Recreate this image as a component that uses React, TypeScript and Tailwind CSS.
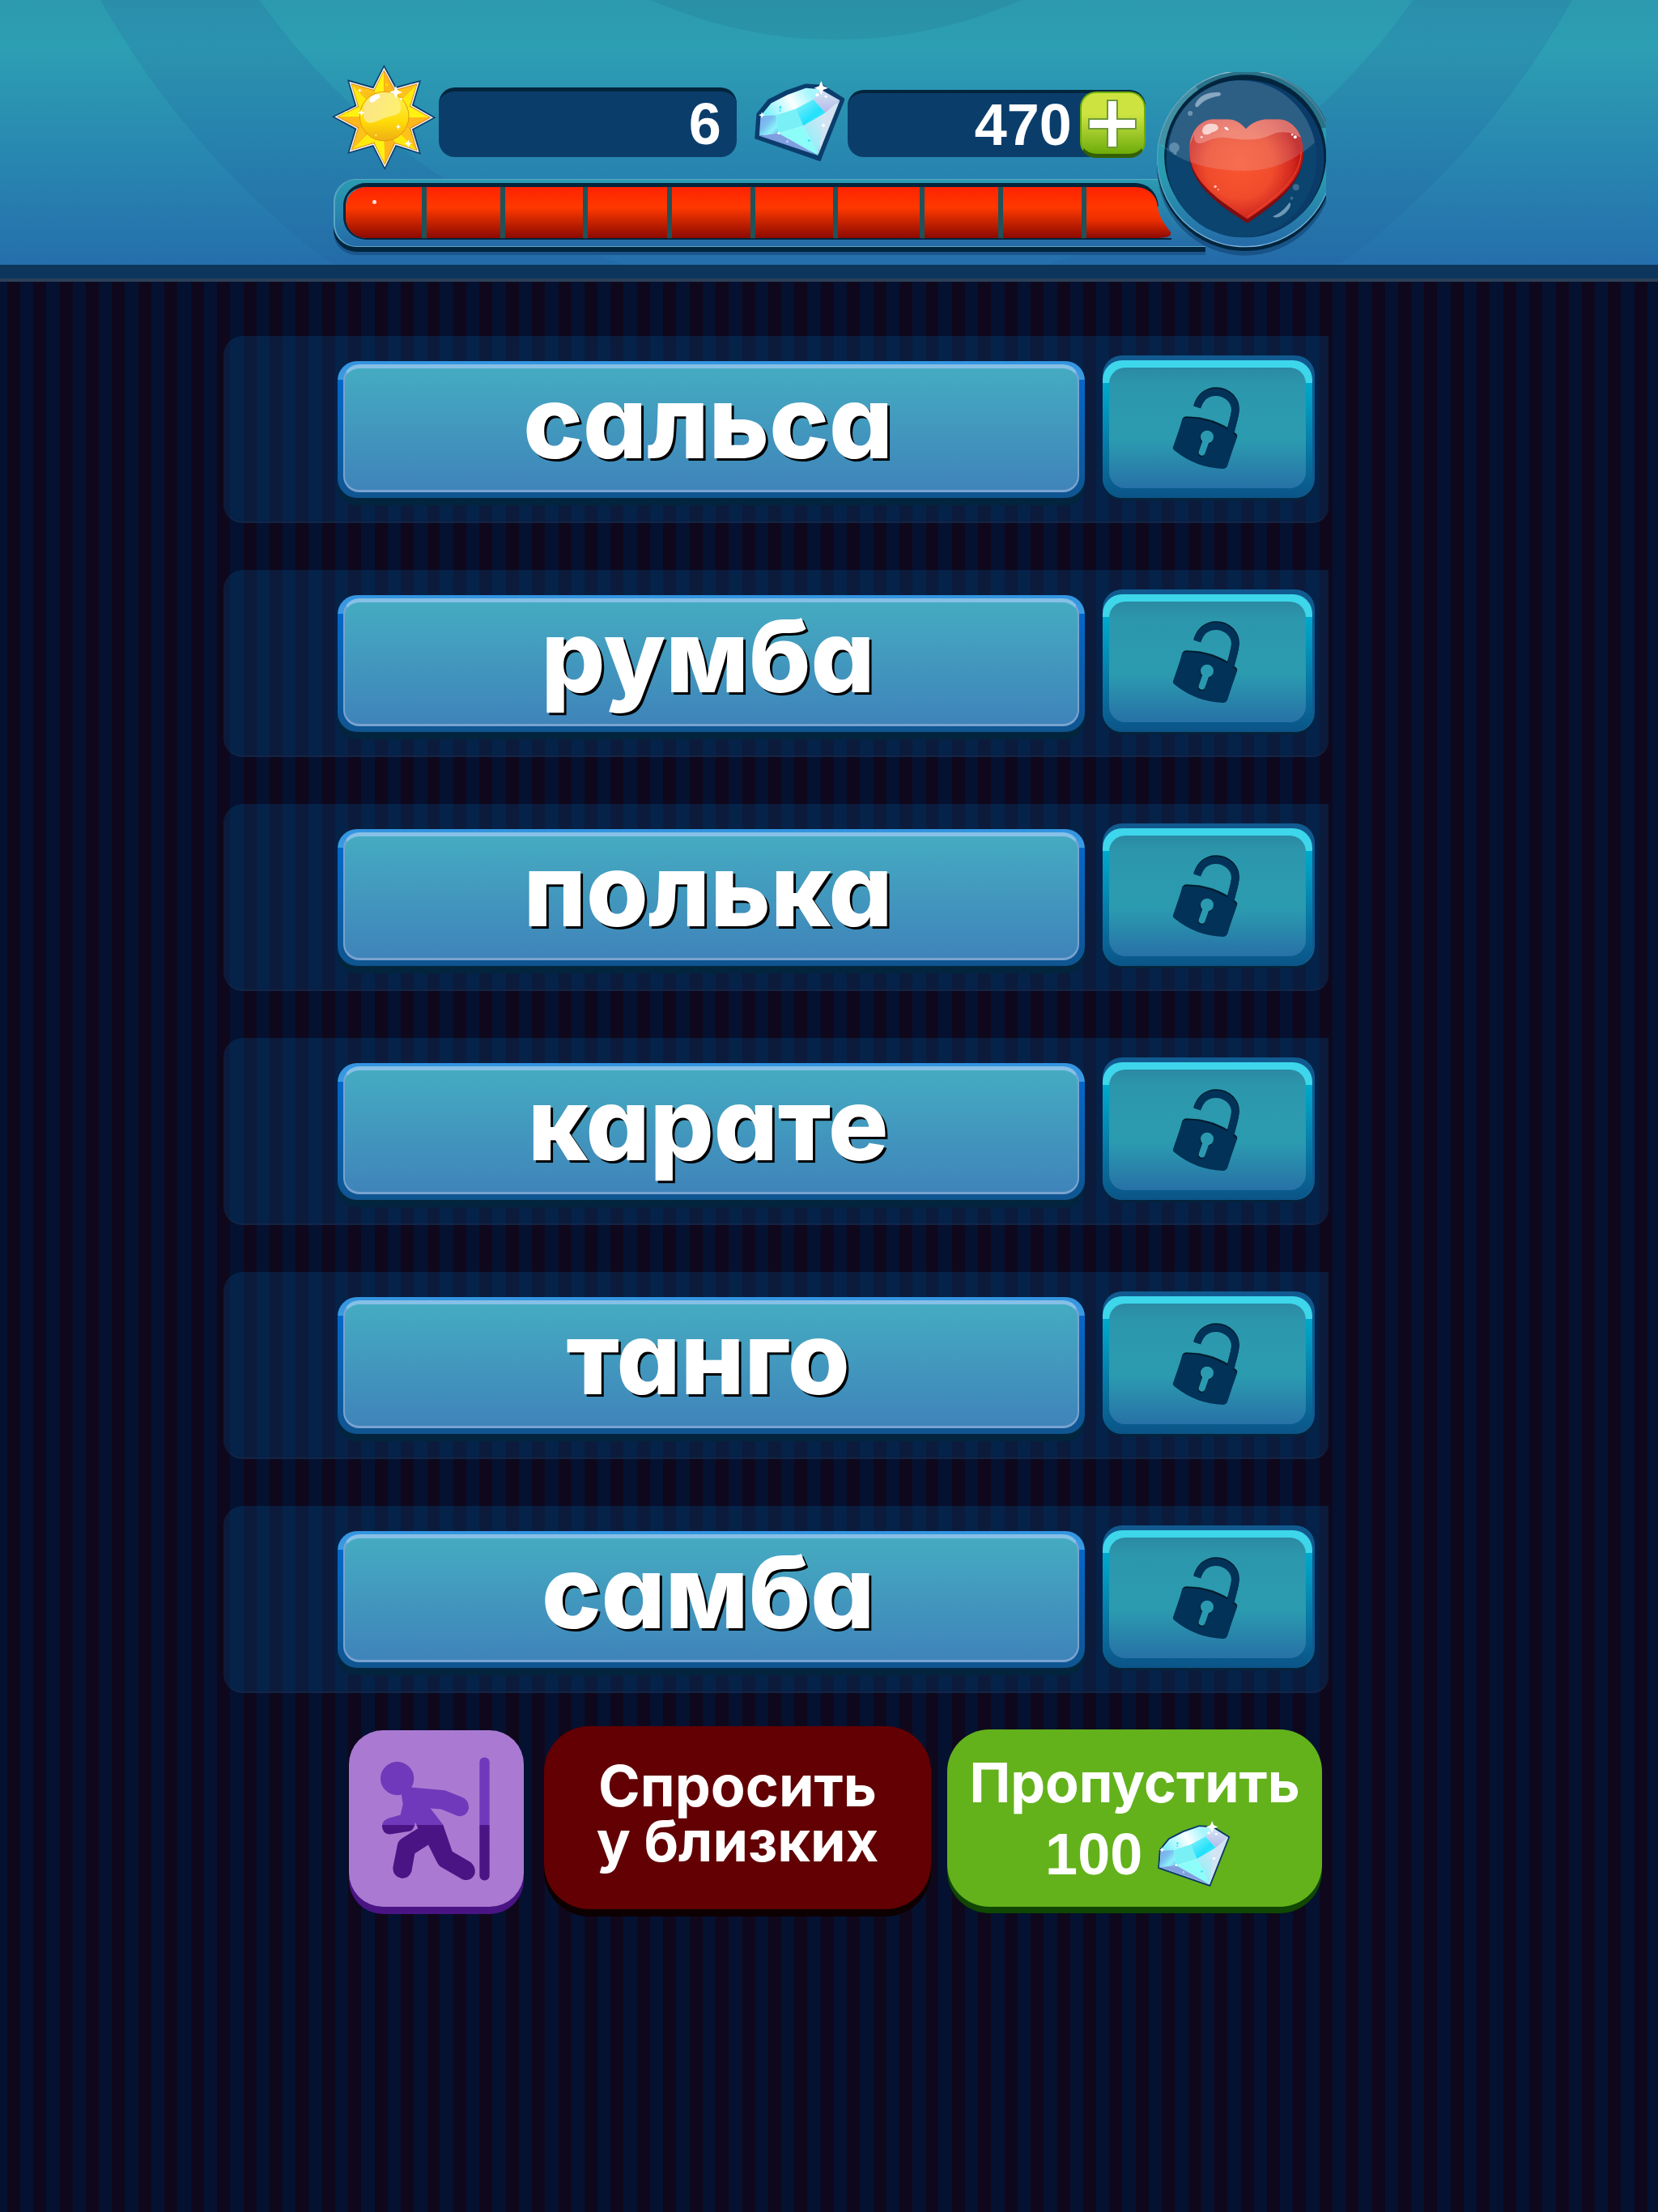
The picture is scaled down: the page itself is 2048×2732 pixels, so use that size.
import React from "react";

const WORDS = ["сальса", "румба", "полька", "карате", "танго", "самба"];

const TIPS: [number, number][] = [
  [223, 60], [360, 117], [415, 256], [360, 392], [226, 450], [88, 390], [30, 253], [87, 115],
];
const VALLEYS: [number, number][] = [
  [267, 143], [331, 209], [331, 300], [268, 361], [182, 361], [117, 298], [117, 211], [182, 143],
];
const SUN_CENTER: [number, number] = [223, 254];

function toward(p: [number, number], k: number): [number, number] {
  return [SUN_CENTER[0] + (p[0] - SUN_CENTER[0]) * k, SUN_CENTER[1] + (p[1] - SUN_CENTER[1]) * k];
}

function star(tip: number, valley: number) {
  return TIPS.map((t, i) => `${toward(t, tip).join(",")} ${toward(VALLEYS[i], valley).join(",")}`).join(" ");
}

function Sparkle({ x, y, r, fill = "#fff" }: { x: number; y: number; r: number; fill?: string }) {
  const q = r * 0.28;
  return (
    <path
      fill={fill}
      d={`M${x} ${y - r}L${x + q} ${y - q}L${x + r} ${y}L${x + q} ${y + q}L${x} ${y + r}L${x - q} ${y + q}L${x - r} ${y}L${x - q} ${y - q}Z`}
    />
  );
}

function SunIcon() {
  return (
    <svg viewBox="30 57 390 396" className="h-[132px] w-[130px] shrink-0" aria-hidden="true">
      <defs>
        <linearGradient id="sunDisc" x1="0" y1="0" x2="0" y2="1">
          <stop offset="0" stopColor="#fdf060" />
          <stop offset="0.6" stopColor="#ffdc08" />
          <stop offset="1" stopColor="#f0ae14" />
        </linearGradient>
        <linearGradient id="sunGloss" x1="0" y1="0" x2="1" y2="0.3">
          <stop offset="0" stopColor="#fbe38c" />
          <stop offset="1" stopColor="#fdf071" />
        </linearGradient>
      </defs>
      <polygon points={star(1, 1.02)} fill="#0b3d68" />
      <polygon points={star(0.95, 0.96)} fill="#f6f1ee" />
      <polygon points={star(0.9, 0.91)} fill="#d07c04" />
      {TIPS.map((t, i) => {
        const tip = toward(t, 0.88);
        const before = toward(VALLEYS[(i + 7) % 8], 0.88);
        const after = toward(VALLEYS[i], 0.88);
        const light = i % 2 === 0 ? "#fff112" : "#ffc21a";
        const dark = i % 2 === 0 ? "#ffb81c" : "#ffea10";
        return (
          <g key={i}>
            <polygon points={`${SUN_CENTER.join(",")} ${before.join(",")} ${tip.join(",")}`} fill={i > 3 ? dark : light} />
            <polygon points={`${SUN_CENTER.join(",")} ${tip.join(",")} ${after.join(",")}`} fill={i > 3 ? light : dark} />
          </g>
        );
      })}
      <circle cx="224" cy="251" r="91" fill="url(#sunDisc)" stroke="#e29a0c" strokeWidth="3" />
      <path d="M147 250C140 200 180 163 225 163C262 163 285 190 285 222C284 250 250 248 222 258C190 272 156 292 147 250Z" fill="url(#sunGloss)" />
      <path d="M170 192C172 172 192 168 206 172C214 182 200 186 192 192C184 202 170 204 170 192Z" fill="#fff" />
      <Sparkle x={267} y={162} r={24} />
      <Sparkle x={139} y={238} r={13} />
      <Sparkle x={313} y={352} r={15} />
      <Sparkle x={276} y={290} r={10} />
      <Sparkle x={133} y={155} r={8} />
      <Sparkle x={233} y={134} r={8} fill="#ffe600" />
      <Sparkle x={144} y={348} r={8} fill="#ffe600" />
      <Sparkle x={310} y={182} r={8} fill="#ffe600" />
      <Sparkle x={80} y={238} r={8} fill="#ffe600" />
      <circle cx="286" cy="187" r="4" fill="#fff" />
      <circle cx="193" cy="321" r="3" fill="#fff3a0" />
    </svg>
  );
}

function Diamond({ id, large }: { id: string; large?: boolean }) {
  return (
    <svg
      viewBox={large ? "863 463 282 258" : "868 470 272 246"}
      className={large ? "h-[102px] w-[111px] shrink-0" : "h-[82px] w-[91px] shrink-0"}
      aria-hidden="true"
    >
      <defs>
        <linearGradient id={`${id}Top`} x1="0" y1="0.6" x2="1" y2="0.3">
          <stop offset="0" stopColor="#7df2fb" />
          <stop offset="0.5" stopColor="#fbffff" />
          <stop offset="0.85" stopColor="#a8f6fd" />
        </linearGradient>
        <linearGradient id={`${id}Core`} x1="0" y1="0" x2="1" y2="1">
          <stop offset="0" stopColor="#8ff3fb" />
          <stop offset="0.6" stopColor="#22e0fb" />
          <stop offset="1" stopColor="#66f0fd" />
        </linearGradient>
        <linearGradient id={`${id}Left`} x1="0" y1="0" x2="1" y2="1">
          <stop offset="0" stopColor="#7fa5ea" />
          <stop offset="0.4" stopColor="#79c0f0" />
          <stop offset="0.7" stopColor="#8cf4fa" />
          <stop offset="1" stopColor="#6fb6ee" />
        </linearGradient>
        <linearGradient id={`${id}Right`} x1="0" y1="1" x2="0.7" y2="0">
          <stop offset="0" stopColor="#7af3fa" />
          <stop offset="1" stopColor="#cfe6f4" />
        </linearGradient>
        <linearGradient id={`${id}Tip`} x1="0" y1="0" x2="0" y2="1">
          <stop offset="0" stopColor="#d4e6f4" />
          <stop offset="1" stopColor="#b4b9ea" />
        </linearGradient>
      </defs>
      <path
        d="M1024 489L1075 492L1135 530L1064 710L874 644L879 577L912 536L965 509Z"
        fill="#e8f4fb"
        stroke="#0b3d6c"
        strokeWidth={large ? 20 : 6}
        strokeLinejoin="miter"
      />
      <path d="M1024 492L1070 496L1048 531L992 559L930 579L882 580L915 540L967 513Z" fill={`url(#${id}Top)`} />
      <path d="M1070 496L1131 531L1086 570L1048 528Z" fill={`url(#${id}Tip)`} />
      <path d="M882 580L930 578L938 634L878 642Z" fill={`url(#${id}Left)`} />
      <path d="M930 578L992 558L1016 611L938 634Z" fill="#78f0f6" />
      <path d="M992 558L1048 528L1086 570L1016 611Z" fill={`url(#${id}Core)`} />
      <path d="M1016 611L1086 570L1062 704Z" fill={`url(#${id}Right)`} />
      <path d="M1086 570L1131 531L1062 704Z" fill="#d3e3f1" />
      <path d="M938 634L1016 611L1062 704Z" fill="#8dfdf9" />
      <path d="M878 642L938 634L1062 704Z" fill="#7f9fe0" />
      <Sparkle x={1072} y={492} r={22} />
      <Sparkle x={886} y={577} r={10} />
      <circle cx="1060" cy="514" r="5" fill="#fff" />
      <circle cx="1087" cy="519" r="4" fill="#fff" />
      <circle cx="1079" cy="609" r="5" fill="#fff" />
      <circle cx="939" cy="634" r="4" fill="#fff" />
      <circle cx="966" cy="660" r="4" fill="#b9cdf5" />
      <circle cx="944" cy="553" r="4" fill="#38e3f6" />
      <circle cx="943" cy="563" r="3" fill="#38e3f6" />
      <circle cx="1034" cy="657" r="4" fill="#38e3f6" />
    </svg>
  );
}

function HeartMedallion() {
  return (
    <svg viewBox="148 87 626 681" className="absolute top-[10px] right-px h-[227px] w-[209px]" role="img" aria-label="Жизни">
      <defs>
        <linearGradient id="ring" x1="0" y1="0" x2="0" y2="1">
          <stop offset="0" stopColor="#2a9bb0" />
          <stop offset="0.6" stopColor="#2a9bb0" />
          <stop offset="1" stopColor="#256aa8" />
        </linearGradient>
        <linearGradient id="rim" x1="0" y1="0" x2="0" y2="1">
          <stop offset="0" stopColor="#9cc8d6" />
          <stop offset="0.5" stopColor="#4aa2bd" />
          <stop offset="1" stopColor="#7db4dd" />
        </linearGradient>
        <radialGradient id="heart" gradientUnits="userSpaceOnUse" cx="455" cy="430" r="225">
          <stop offset="0" stopColor="#fb5631" />
          <stop offset="0.55" stopColor="#f04c2c" />
          <stop offset="0.85" stopColor="#d42a20" />
          <stop offset="1" stopColor="#bd1412" />
        </radialGradient>
        <clipPath id="heartClip">
          <path d="M478 298C460 278 440 262 408 262L350 262C300 270 268 315 268 378C268 490 375 560 483 632C590 560 690 490 690 385C690 315 655 270 605 262L550 262C515 266 492 282 478 298Z" />
        </clipPath>
      </defs>
      <circle cx="475" cy="440" r="327" fill="#0b3460" opacity="0.45" />
      <circle cx="475" cy="423" r="327" fill="#02253d" />
      <circle cx="475" cy="408" r="326" fill="url(#ring)" stroke="url(#rim)" strokeWidth="4" />
      <path d="M155 350C190 180 320 84 475 84C620 84 735 160 785 290L740 300C690 190 600 110 475 105C330 105 220 200 190 366Z" fill="#293c55" opacity="0.42" />
      <path d="M155 350C172 262 222 185 290 137L310 165C240 210 205 280 190 370Z" fill="#7fd3dd" opacity="0.3" />
      <circle cx="475" cy="397" r="300" fill="#02253d" />
      <circle cx="475" cy="408" r="292" fill="#0b3b69" />
      <ellipse cx="461" cy="408" rx="279" ry="291" fill="#0a446f" />
      <path d="M268 378C262 500 375 580 483 647C590 575 692 500 690 385Z" fill="#7d0d12" />
      <g clipPath="url(#heartClip)">
        <rect x="260" y="255" width="440" height="400" fill="url(#heart)" />
        <path d="M260 255H700V345C660 310 610 300 570 320C520 342 470 340 420 332C370 322 340 340 320 348C300 356 285 350 285 320L260 380Z" fill="#f6a093" opacity="0.5" />
        <path d="M483 624C590 550 680 480 682 385" fill="none" stroke="#f4502c" strokeWidth="3" />
      </g>
      <path d="M155 352C230 420 340 453 475 453C580 453 665 410 733 348C712 235 610 118 455 118C330 118 205 215 190 372Z" fill="#e8eef6" opacity="0.16" />
      <path d="M290 205C305 172 340 160 380 162C388 170 384 175 375 176C340 182 315 196 302 214C294 220 288 216 290 205Z" fill="#9fb9cf" opacity="0.8" />
      <circle cx="271" cy="240" r="9" fill="#6f94b3" />
      <circle cx="212" cy="367" r="19" fill="#5f8cab" />
      <circle cx="215" cy="388" r="6" fill="#5f8cab" />
      <path d="M316 302C320 280 345 274 368 282C384 294 372 306 352 310C340 322 314 324 316 302Z" fill="#fbe4e2" opacity="0.85" />
      <path d="M397 293C402 286 412 292 414 302C408 304 400 300 397 293Z" fill="#fff" />
      <circle cx="313" cy="328" r="4" fill="#fbe4e2" />
      <circle cx="660" cy="328" r="6" fill="#fff" />
      <circle cx="649" cy="319" r="4" fill="#fbe4e2" />
      <circle cx="364" cy="511" r="5" fill="#ffc6bc" />
      <circle cx="375" cy="523" r="3" fill="#ffc6bc" />
      <path d="M577 622C600 612 622 595 638 571C648 572 642 590 630 603C612 622 590 632 577 622Z" fill="#6d98b6" />
      <circle cx="663" cy="514" r="12" fill="#3d6b8d" />
      <circle cx="647" cy="554" r="6" fill="#3d6b8d" />
    </svg>
  );
}

function LockIcon() {
  return (
    <svg viewBox="624 260 252 312" className="h-[104px] w-[84px]" aria-hidden="true">
      <g fill="#021a2b" stroke="#021a2b" transform="translate(1 -4)">
        <path d="M716 338C728 300 755 282 785 282C828 282 858 315 857 350C856 375 846 400 840 425" fill="none" strokeWidth="29" />
        <path d="M674 377Q780 376 859 440Q866 446 861 455L845 500L640 470L661 386Q665 377 674 377Z" strokeWidth="2" />
      </g>
      <path d="M716 338C728 300 755 282 785 282C828 282 858 315 857 350C856 375 846 400 840 432" fill="none" stroke="#023257" strokeWidth="28" />
      <path
        fill="#023257"
        d="M676 378Q775 378 856 440Q864 446 861 455L829 553Q824 566 811 566Q710 562 631 497Q625 492 627 486L661 386Q665 378 676 378Z"
      />
      <g fill="#021a2b" stroke="#021a2b" transform="translate(-2 4)">
        <circle cx="753" cy="448" r="24" stroke="none" />
        <path d="M749 462L734 505" strokeWidth="25" strokeLinecap="round" />
      </g>
      <circle cx="753" cy="448" r="24" fill="#2b9ab0" />
      <path d="M749 462L734 505" stroke="#2b9ab0" strokeWidth="24" strokeLinecap="round" />
    </svg>
  );
}

function RunnerIcon() {
  return (
    <svg viewBox="205 205 420 470" className="h-[157px] w-[140px]" aria-hidden="true">
      <defs>
        <linearGradient id="runner" gradientUnits="userSpaceOnUse" x1="0" y1="461" x2="0" y2="463">
          <stop offset="0" stopColor="#7039bb" />
          <stop offset="1" stopColor="#4a1484" />
        </linearGradient>
      </defs>
      <g fill="url(#runner)">
        <circle cx="273" cy="290" r="62" />
        <rect x="578" y="212" width="37" height="456" rx="18" />
        <path d="M322 323L450 334L514 360Q540 372 538 402Q530 432 500 430L436 404L396 401L443 462L477 561L544 600Q566 618 560 645Q546 674 515 664L432 616Q425 610 420 600L388 536L338 568L326 635Q316 662 288 660Q256 652 257 620L274 535Q278 518 292 511L350 475L340 452Q334 484 318 486L246 497Q216 494 217 464Q220 445 240 438L285 425L294 385L288 345Z" />
      </g>
    </svg>
  );
}

function Counter({ value, className }: { value: string; className: string }) {
  return (
    <output className={`font-['Liberation_Sans',sans-serif] text-7xl leading-[80px] font-bold text-white ${className}`}>
      {value}
    </output>
  );
}

function HealthBar() {
  return (
    <div
      role="progressbar"
      aria-label="Здоровье"
      aria-valuenow={10}
      aria-valuemax={10}
      className="mt-[10px] mr-[150px] ml-[2px] h-[84px] rounded-l-[28px] border-y border-l-2 border-[#5aa7c5] bg-linear-to-b from-[#2b9bb0] via-[#2985ac] to-[#256aa8] pt-[4px] pl-[10px] shadow-[0_6px_0_#02253d,0_10px_0_#1b568c]"
    >
      <div className="mr-[42px] grid h-[70px] grid-cols-[100fr_97fr_102fr_104fr_103fr_102fr_107fr_97fr_103fr_105fr] rounded-l-[28px] border-b-2 border-l-[3px] border-[#02253d]">
        {Array.from({ length: 9 }, (_, i) => (
          <div key={i} className="border-t-[5px] border-[#02253d] first:rounded-tl-[25px]">
            <div
              className={`h-full border-r-[6px] border-[#20525a] bg-linear-to-b from-[#fe2500] from-5% via-[#ff3800] via-40% to-[#8c0900] ${i === 0 ? "rounded-l-[25px] pt-[16px]" : ""}`}
            >
              {i === 0 && <div className="ml-[33px] size-[5px] rounded-full bg-[#ffe0d8]" />}
            </div>
          </div>
        ))}
        <svg viewBox="0 -5 105 68" preserveAspectRatio="none" className="h-full w-full" aria-hidden="true">
          <defs>
            <linearGradient id="tail" x1="0" y1="0" x2="0" y2="1">
              <stop offset="0.05" stopColor="#fe2500" />
              <stop offset="0.4" stopColor="#ff3800" />
              <stop offset="0.65" stopColor="#ec2e00" />
              <stop offset="1" stopColor="#8c0900" />
            </linearGradient>
            <linearGradient id="tailBack" x1="0" y1="0" x2="0" y2="1">
              <stop offset="0" stopColor="#2b98af" />
              <stop offset="1" stopColor="#256daa" />
            </linearGradient>
          </defs>
          <rect y="-5" width="105" height="68" fill="url(#tailBack)" />
          <path d="M0 -5H60C80 -4 88 10 89 24L60 20L0 4Z" fill="#02253d" />
          <path d="M0 0H60C78 0 87 12 88 24C90 40 99 48 104 56Q106 63 88 63H0Z" fill="url(#tail)" />
        </svg>
      </div>
    </div>
  );
}

function Header() {
  return (
    <header className="relative h-[348px] border-b-4 border-[#2d4058] bg-[#0c365c] pb-[17px]">
      <div className="relative h-[327px] overflow-hidden bg-linear-to-b from-[#2c99ae] from-0% via-[#2d9fb3] via-17% to-[#256fac]">
        <svg viewBox="0 0 2048 327" preserveAspectRatio="xMidYMin slice" className="absolute inset-0 h-full w-full" aria-hidden="true">
          <circle cx="1033" cy="-508" r="557" fill="#1d6c88" opacity="0.2" />
          <circle cx="1033" cy="-508" r="958" fill="none" stroke="#20609a" strokeWidth="166" opacity="0.18" />
        </svg>
        <div className="relative ml-[410px] w-3/5 pt-[79px]">
          <div className="mr-[224px] flex h-[132px] items-start">
            <SunIcon />
            <div className="mt-[29px] ml-[2px] flex h-[86px] flex-1 justify-end rounded-[20px] border-t-[5px] border-[#02253d] bg-[#0b3d6b]">
              <Counter value="6" className="mr-[19px]" />
            </div>
            <div className="mt-[18px] mr-[4px] ml-[22px]">
              <Diamond id="wallet" large />
            </div>
            <div className="mt-[32px] flex h-[83px] flex-1 justify-end rounded-[20px] border-t-4 border-[#02253d] bg-[#0b3d6b]">
              <Counter value="470" className="mr-[10px] -mt-px" />
              <button
                type="button"
                aria-label="Купить кристаллы"
                className="-mt-[2px] flex h-[82px] w-[81px] items-center justify-center rounded-[20px] border-2 border-b-[5px] border-[#6fae0a] border-b-[#345f04] bg-linear-to-b from-[#cde340] from-35% to-[#6cac06]"
              >
                <svg viewBox="0 0 60 60" className="size-[60px]" aria-hidden="true">
                  <path d="M24 1H36V24H59V36H36V59H24V36H1V24H24Z" fill="#fff" stroke="#6f9a3a" strokeWidth="2" />
                </svg>
              </button>
            </div>
          </div>
          <HealthBar />
          <div className="absolute inset-x-0 top-[79px]">
            <HeartMedallion />
          </div>
        </div>
      </div>
    </header>
  );
}

function WordRow({ word }: { word: string }) {
  return (
    <li className="flex h-[231px] items-end rounded-l-[24px] rounded-br-[20px] border-b-2 border-[#1d2a48]/60 bg-[#084f8b]/28 pr-[17px] pb-[29px] pl-[141px]">
      <button
        type="button"
        className="flex h-[169px] flex-1 rounded-[24px] bg-[linear-gradient(#3394e0_0,#3a9be4_23px,#0567c8_23px,#0f5590_100%)] px-[7px] pt-[4px] pb-[7px] shadow-[0_9px_0_#02253d]"
      >
        <span className="flex h-full flex-1 items-center justify-center rounded-[20px] border-2 border-t-[5px] border-b-[3px] border-[#79a3cf] border-t-[#86c0e6] bg-linear-to-b from-[#45abc1] to-[#3f84ba] pr-[8px] pb-[18px] font-['Inter',sans-serif] text-[124px] leading-none font-extrabold text-white [font-feature-settings:'cv11'] [text-shadow:3px_3px_0_#000]">
          {word}
        </span>
      </button>
      <button
        type="button"
        aria-label={`Открыть: ${word}`}
        className="ml-[22px] h-[176px] w-[262px] rounded-[24px] bg-[#115a90] pt-[6px] pr-[3px] shadow-[0_3px_0_#04233c]"
      >
        <span className="block h-[170px] rounded-[24px] bg-[linear-gradient(#3dd6ea_0,#3dd6ea_28px,#00a9cc_28px,#0b5487_100%)] px-[8px] pt-[9px] pb-[12px]">
          <span className="flex h-full items-center justify-center rounded-[20px] bg-[linear-gradient(#2b8aa3_0%,#2c97ac_15%,#2b9bb0_60%,#2771a6_100%)] pr-[4px]">
            <LockIcon />
          </span>
        </span>
      </button>
    </li>
  );
}

export default function App() {
  return (
    <div className="min-h-screen bg-[repeating-linear-gradient(90deg,#051130_0,#051130_0.43%,#0f081c_0.43%,#0f081c_1.21%,#051130_1.21%,#051130_1.583%)]">
      <Header />
      <main className="ml-[276px] w-2/3 pt-[67px]">
        <ul className="flex flex-col gap-[58px]">
          {WORDS.map((word) => (
            <WordRow key={word} word={word} />
          ))}
        </ul>
        <div className="mt-[41px] flex items-start gap-[20px] pr-[8px] pl-[155px] font-['Inter',sans-serif] font-bold text-white [font-feature-settings:'cv11']">
          <button
            type="button"
            aria-label="Выйти"
            className="mt-[5px] mr-[5px] flex h-[218px] w-[216px] items-center justify-center rounded-[42px] bg-[#aa7ad2] pr-[2px] shadow-[0_9px_0_#4a1484]"
          >
            <RunnerIcon />
          </button>
          <button
            type="button"
            className="flex h-[226px] w-[478px] flex-col items-center justify-center rounded-[56px] bg-[#620003] pb-[10px] text-[70px] leading-[68px] shadow-[0_9px_0_#0d0000]"
          >
            <span>Спросить</span>
            <span>у близких</span>
          </button>
          <button
            type="button"
            className="mt-[4px] flex h-[219px] flex-1 flex-col items-center justify-center rounded-[52px] bg-[#63b21c] text-[68px] leading-[80px] shadow-[0_8px_0_#0f4703]"
          >
            <span>Пропустить</span>
            <span className="flex items-center gap-[18px] pt-[8px] pl-[8px] font-['Liberation_Sans',sans-serif] text-7xl leading-[80px]">
              100
              <Diamond id="price" />
            </span>
          </button>
        </div>
      </main>
    </div>
  );
}
